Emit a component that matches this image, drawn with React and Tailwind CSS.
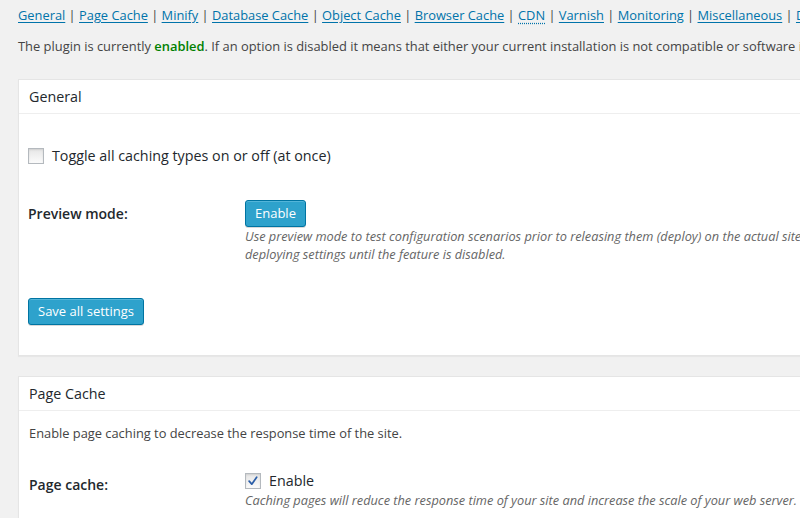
import React from "react";

const links = [
  "General",
  "Page Cache",
  "Minify",
  "Database Cache",
  "Object Cache",
  "Browser Cache",
  "CDN",
  "Varnish",
  "Monitoring",
  "Miscellaneous",
  "Debug",
];

function Checkbox({ checked }) {
  return (
    <span className="relative inline-flex h-[16px] w-[16px] shrink-0 items-center justify-center border border-[#b4b9be] bg-[linear-gradient(to_bottom,#e6e6e6,#fbfbfb)] shadow-[inset_0_1px_2px_rgba(0,0,0,0.1)]">
      {checked && (
        <svg viewBox="0 0 16 16" className="h-[14px] w-[14px]">
          <path d="M3.6 8.2 L6.6 11.6 L12.2 3.6" fill="none" stroke="#2b5ea8" strokeWidth="2" strokeLinecap="round" strokeLinejoin="round" />
        </svg>
      )}
    </span>
  );
}

function Button({ children }) {
  return (
    <button className="h-[27px] rounded-[3px] border border-[#0074a2] bg-[#2ea2cc] px-[9px] text-[13px] leading-[25px] text-white shadow-[inset_0_1px_0_rgba(120,200,230,0.5),0_1px_0_rgba(0,0,0,0.15)]">
      {children}
    </button>
  );
}

function PanelHeader({ title }) {
  return (
    <div className="flex h-[34px] items-center border-b border-[#eeeeee] px-[10px] pt-[1px] text-[14.3px] text-[#23282d]">
      {title}
    </div>
  );
}

export default function App() {
  return (
    <div
      className="h-[518px] w-[800px] overflow-hidden bg-[#f1f1f1] text-[13px] text-[#444]"
      style={{ fontFamily: '"Open Sans", "Noto Sans", sans-serif' }}
    >
      <div className="w-[1000px] pl-[18px]">
        <div className="flex h-[20px] items-center whitespace-pre pt-[10px] text-[12.85px] leading-[20px]">
          {links.map((l, i) => (
            <React.Fragment key={l}>
              {i > 0 && <span className="text-[#444]">{" | "}</span>}
              <a
                className={
                  l === "CDN"
                    ? "text-[#0073aa] underline decoration-dotted underline-offset-[3px]"
                    : "text-[#0073aa] underline underline-offset-[2px]"
                }
              >
                {l}
              </a>
            </React.Fragment>
          ))}
        </div>
        <p className="mt-[16px] whitespace-nowrap text-[12.9px] leading-[20px]">
          The plugin is currently <span className="font-semibold text-[#008000]">enabled</span>. If an option is disabled it means that either your current installation is not compatible or software installation is required.
        </p>

        <div className="mt-[23px] w-[900px] border border-[#e5e5e5] bg-white shadow-[0_1px_1px_rgba(0,0,0,0.04)]">
          <PanelHeader title="General" />
          <div className="px-[9px] pb-[30px]">
            <label className="mt-[32px] flex h-[20px] items-center gap-[8px] text-[14.3px] text-[#23282d]">
              <Checkbox />
              <span>Toggle all caching types on or off (at once)</span>
            </label>
            <div className="mt-[34px] flex">
              <div className="flex h-[27px] w-[217px] shrink-0 items-center text-[14px] font-semibold text-[#23282d]">
                Preview mode:
              </div>
              <div>
                <Button>Enable</Button>
                <p className="whitespace-nowrap text-[12.75px] italic leading-[18px] text-[#666]">
                  Use preview mode to test configuration scenarios prior to releasing them (deploy) on the actual site. Preview mode remains active even after
                  <br />
                  deploying settings until the feature is disabled.
                </p>
              </div>
            </div>
            <div className="mt-[35px]">
              <Button>Save all settings</Button>
            </div>
          </div>
        </div>

        <div className="mt-[20px] w-[900px] border border-[#e5e5e5] bg-white shadow-[0_1px_1px_rgba(0,0,0,0.04)]">
          <PanelHeader title="Page Cache" />
          <div className="px-[10px] pb-[30px]">
            <p className="mt-[12px] text-[12.85px] leading-[20px]">
              Enable page caching to decrease the response time of the site.
            </p>
            <div className="mt-[28px] flex">
              <div className="flex w-[216px] shrink-0 items-start pt-[4px] text-[14px] font-semibold leading-[20px] text-[#23282d]">
                Page cache:
              </div>
              <div>
                <label className="flex h-[20px] items-center gap-[8px] text-[14.3px] text-[#23282d]">
                  <Checkbox checked />
                  <span>Enable</span>
                </label>
                <p className="whitespace-nowrap text-[12.75px] italic leading-[18px] text-[#666]">
                  Caching pages will reduce the response time of your site and increase the scale of your web server.
                </p>
              </div>
            </div>
          </div>
        </div>
      </div>
    </div>
  );
}
